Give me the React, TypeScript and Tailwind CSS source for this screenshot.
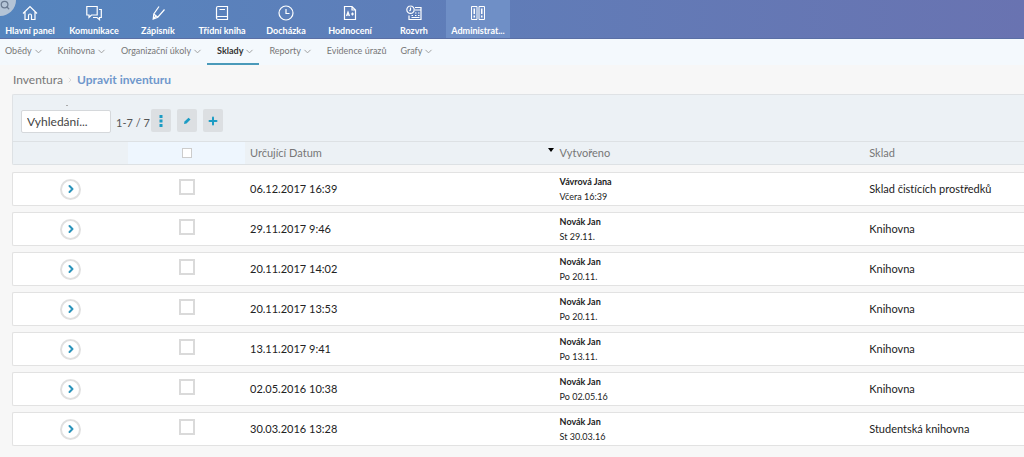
import type { ReactNode } from "react";
import { ChevronDown, ChevronRight, Plus, Search } from "lucide-react";

const modules: { label: string; icon: ReactNode; active?: boolean }[] = [
  {
    label: "Hlavní panel",
    icon: <path d="M1 8.500L8 1.500l7 7M3 7v7.500h3.500V10.500a1.500 1.500 0 0 1 3 0v4H13V7" />,
  },
  {
    label: "Komunikace",
    icon: <path d="M.8 1.500h10.400v8.500H5.500l-2.500 2.300V10H.8zM13 4.500h2.300v8H13.500v2.200l-2.500-2.200H7" />,
  },
  {
    label: "Zápisník",
    icon: <path d="M9 1.500L3.800 9l-.6 5 4.600-1.800L14.500 4.500M3.800 9l4 3.200M3.200 14L6 10.800" />,
  },
  {
    label: "Třídní kniha",
    icon: <path d="M4 1.500h9.500v13H4a1.500 1.500 0 0 1-1.500-1.500V3A1.500 1.500 0 0 1 4 1.500zM2.500 13A1.500 1.500 0 0 1 4 11.500h9.500M5.500 4.500h5.500" />,
  },
  {
    label: "Docházka",
    icon: <path d="M8 1a7 7 0 1 1 0 14a7 7 0 0 1 0-14M8 4v4.500h3.500" />,
  },
  {
    label: "Hodnocení",
    icon: (
      <>
        <path d="M2.500 1.500h7.500L13.500 5v9.500h-11zM10 1.500V5h3.500" />
        <path d="M4.500 11l1.500-4 1.500 4M5 10h2M9 9h3M10.500 7.500v3" />
      </>
    ),
  },
  {
    label: "Rozvrh",
    icon: (
      <>
        <path d="M4.500 1a3.700 3.700 0 1 1 0 7.400a3.700 3.700 0 0 1 0-7.400M4.500 2.500v2.500l-1 1M9 2.500h6v12H3v-4M9 5h6" />
        <path d="M9 8h1.500M12 8h1.500M5.500 10.500H7M9 10.500h1.500M12 10.500h1.500M5.500 12.500h8" />
      </>
    ),
  },
  {
    label: "Administrat...",
    active: true,
    icon: (
      <>
        <path strokeWidth="1" d="M1.500 1.500h5.500v13H1.500zM9 1.500h5.500v13H9z" />
        <path strokeWidth="1.500" d="M4.250 3.500v5.500M4.250 10.500v2M11.750 3.500v5.500M11.750 10.500v2" />
      </>
    ),
  },
];

const sections = [
  { label: "Obědy", menu: true },
  { label: "Knihovna", menu: true },
  { label: "Organizační úkoly", menu: true },
  { label: "Sklady", menu: true, active: true },
  { label: "Reporty", menu: true },
  { label: "Evidence úrazů" },
  { label: "Grafy", menu: true },
];

const rows = [
  { date: "06.12.2017 16:39", author: "Vávrová Jana", created: "Včera 16:39", store: "Sklad čistících prostředků" },
  { date: "29.11.2017 9:46", author: "Novák Jan", created: "St 29.11.", store: "Knihovna" },
  { date: "20.11.2017 14:02", author: "Novák Jan", created: "Po 20.11.", store: "Knihovna" },
  { date: "20.11.2017 13:53", author: "Novák Jan", created: "Po 20.11.", store: "Knihovna" },
  { date: "13.11.2017 9:41", author: "Novák Jan", created: "Po 13.11.", store: "Knihovna" },
  { date: "02.05.2016 10:38", author: "Novák Jan", created: "Po 02.05.16", store: "Knihovna" },
  { date: "30.03.2016 13:28", author: "Novák Jan", created: "St 30.03.16", store: "Studentská knihovna" },
];

const columns = "grid grid-cols-[115px_117px_31fr_31fr_16fr] items-center";

function TopBar() {
  return (
    <header className="relative bg-linear-to-r from-[#5585be] to-[#6973b1]">
      <nav className="-ml-0.5 flex h-[39px] border-b border-[#5a6fa5]">
        {modules.map((m) => (
          <a
            key={m.label}
            href="#"
            className={`flex w-16 shrink-0 flex-col items-center overflow-hidden pt-[5px] text-[9px] leading-[14px] font-bold whitespace-nowrap text-white ${
              m.active ? "bg-[#6f8fc6]" : ""
            }`}
          >
            <svg viewBox="0 0 16 16" className="mb-[3px] size-4 shrink-0" fill="none" stroke="currentColor" strokeWidth="1.200">
              {m.icon}
            </svg>
            {m.label}
          </a>
        ))}
      </nav>
      <button
        aria-label="Hledat"
        className="absolute -top-4 -left-4 flex size-8 items-end justify-end rounded-full bg-[#b4c4d6] p-[6px] text-[#6a7a90]"
      >
        <Search className="size-[10px]" strokeWidth={3} />
      </button>
    </header>
  );
}

function SectionNav() {
  return (
    <nav className="flex h-[26px] items-stretch bg-[#f4f9fd] text-[9px] text-[#777]">
      {sections.map((s) => (
        <a
          key={s.label}
          href="#"
          className={`flex items-center gap-px border-b-2 pr-1 pl-[10px] whitespace-nowrap first:pl-[5px] ${
            s.active ? "border-[#4a9aba] font-bold text-[#333]" : "border-transparent"
          }`}
        >
          {s.label}
          {s.menu && <ChevronDown className="size-[11px] text-[#999]" strokeWidth={2} />}
        </a>
      ))}
    </nav>
  );
}

function Toolbar() {
  const button = "flex h-[23px] w-5 items-center justify-center rounded-xs bg-[#dcdfe2] text-[#1c9cc4]";
  return (
    <div className="flex h-[46px] items-end pb-2 pl-2">
      <div className="relative">
        <span className="absolute -top-[5px] left-[45px] h-px w-0.5 bg-[#aaa]" />
        <input
          aria-label="Vyhledání"
          placeholder="Vyhledání..."
          className="block h-[23px] w-[90px] rounded-xs border border-[#d5d8db] bg-white px-[5px] text-[12px] placeholder:text-[#444]"
        />
      </div>
      <span className="mr-px ml-[5px] text-[11px] leading-[20px] text-[#555]">1-7 / 7</span>
      <div className="flex gap-[6px] pb-px">
        <button aria-label="Další akce" className={button}>
          <svg viewBox="0 0 4 12" className="h-3 w-1" fill="currentColor">
            <path d="M.5 0h3v3h-3zM.5 4.500h3v3h-3zM.5 9h3v3h-3z" />
          </svg>
        </button>
        <button aria-label="Upravit" className={button}>
          <svg viewBox="0 0 8 8" className="size-2" fill="currentColor">
            <path d="M1 7l.5-2.500L5.500.8 7.500 2.500 3.500 6.500z" />
          </svg>
        </button>
        <button aria-label="Přidat" className={button}>
          <Plus className="size-3" strokeWidth={4} />
        </button>
      </div>
    </div>
  );
}

export default function App() {
  return (
    <div className="min-h-screen overflow-x-hidden bg-[#f7f7f7] pb-3 font-['Lato',sans-serif] text-[#222] [font-variant-ligatures:none]">
      <TopBar />
      <SectionNav />
      <nav aria-label="Cesta" className="flex h-[29px] items-center gap-[3px] pt-px pl-[13px] text-[12px] text-[#777]">
        <a href="#">Inventura</a>
        <ChevronRight className="size-2 text-[#ccc]" />
        <a href="#" className="font-bold text-[#6f97cc]">
          Upravit inventuru
        </a>
      </nav>
      <main className="ml-3">
        <div className="rounded-tl-xs border-t border-l border-[#dfe2e5] bg-[#ecf1f5]">
          <Toolbar />
        </div>
        <table className="block text-[11px] leading-4">
          <thead className="block pb-px">
            <tr className={`${columns} h-6 rounded-bl-xs border-y border-l border-[#dde1e4] bg-[#ecf1f5] text-left text-[#777]`}>
              <th aria-label="Detail" />
              <th className="flex h-full items-center justify-center bg-[#eef6fe]">
                <input type="checkbox" aria-label="Vybrat vše" className="size-[10px] appearance-none border border-[#ccc] bg-white" />
              </th>
              <th className="flex justify-between pr-px pl-[5px] font-normal">
                Určující Datum
                <svg viewBox="0 0 6 4" className="mt-[3px] h-1 w-[6px] text-black" fill="currentColor">
                  <path d="M0 0h6L3 4z" />
                </svg>
              </th>
              <th className="pl-[5px] font-normal">Vytvořeno</th>
              <th className="pl-[5px] font-normal">Sklad</th>
            </tr>
          </thead>
          <tbody className="block">
            {rows.map((row) => (
              <tr key={row.date} className={`${columns} mt-[6px] h-[34px] rounded-l-xs border-y border-l border-[#e2e2e2] bg-white`}>
                <td className="flex justify-center">
                  <button
                    aria-label={`Otevřít ${row.date}`}
                    className="flex size-[21px] items-center justify-center rounded-full border-2 border-[#e0e0e0] text-[#2a93ba]"
                  >
                    <ChevronRight className="size-3" strokeWidth={4} />
                  </button>
                </td>
                <td className="flex justify-center pb-1">
                  <input type="checkbox" aria-label={`Vybrat ${row.date}`} className="size-4 appearance-none border-2 border-[#dadada] bg-white" />
                </td>
                <td className="pl-[5px]">{row.date}</td>
                <td className="pl-[5px] text-[9px] leading-[15px]">
                  <div className="font-bold">{row.author}</div>
                  <div>{row.created}</div>
                </td>
                <td className="pl-[5px] whitespace-nowrap">{row.store}</td>
              </tr>
            ))}
          </tbody>
        </table>
      </main>
    </div>
  );
}
